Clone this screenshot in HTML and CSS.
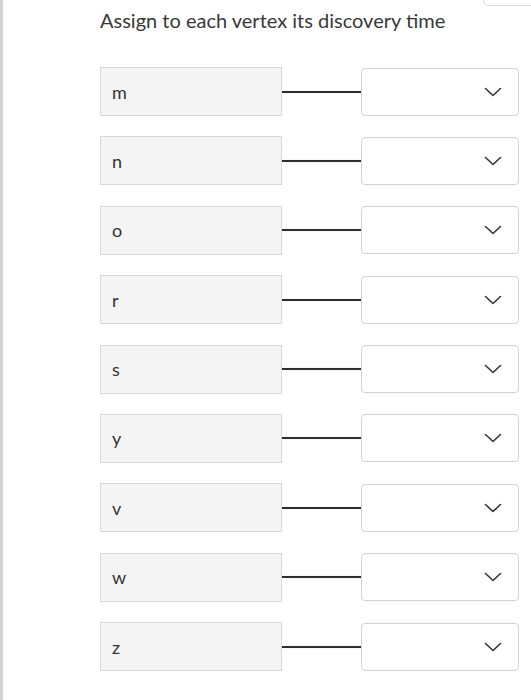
FILE: index.html
```html
<!DOCTYPE html>
<html>
<head>
<meta charset="utf-8">
<link rel="stylesheet" href="styles.css">
</head>
<body>
<div class="page">
  <div class="top-btn"></div>
  <h1 class="title">Assign to each vertex its discovery time</h1>
  <div class="rows">
    <div class="row"><div class="term">m</div><div class="link"></div><div class="select"><svg class="chev" width="18" height="10" viewBox="0 0 18 10"><polyline points="1.5,1.5 9,8.5 16.5,1.5"/></svg></div></div>
    <div class="row"><div class="term">n</div><div class="link"></div><div class="select"><svg class="chev" width="18" height="10" viewBox="0 0 18 10"><polyline points="1.5,1.5 9,8.5 16.5,1.5"/></svg></div></div>
    <div class="row"><div class="term">o</div><div class="link"></div><div class="select"><svg class="chev" width="18" height="10" viewBox="0 0 18 10"><polyline points="1.5,1.5 9,8.5 16.5,1.5"/></svg></div></div>
    <div class="row"><div class="term">r</div><div class="link"></div><div class="select"><svg class="chev" width="18" height="10" viewBox="0 0 18 10"><polyline points="1.5,1.5 9,8.5 16.5,1.5"/></svg></div></div>
    <div class="row"><div class="term">s</div><div class="link"></div><div class="select"><svg class="chev" width="18" height="10" viewBox="0 0 18 10"><polyline points="1.5,1.5 9,8.5 16.5,1.5"/></svg></div></div>
    <div class="row"><div class="term">y</div><div class="link"></div><div class="select"><svg class="chev" width="18" height="10" viewBox="0 0 18 10"><polyline points="1.5,1.5 9,8.5 16.5,1.5"/></svg></div></div>
    <div class="row"><div class="term">v</div><div class="link"></div><div class="select"><svg class="chev" width="18" height="10" viewBox="0 0 18 10"><polyline points="1.5,1.5 9,8.5 16.5,1.5"/></svg></div></div>
    <div class="row"><div class="term">w</div><div class="link"></div><div class="select"><svg class="chev" width="18" height="10" viewBox="0 0 18 10"><polyline points="1.5,1.5 9,8.5 16.5,1.5"/></svg></div></div>
    <div class="row"><div class="term">z</div><div class="link"></div><div class="select"><svg class="chev" width="18" height="10" viewBox="0 0 18 10"><polyline points="1.5,1.5 9,8.5 16.5,1.5"/></svg></div></div>
  </div>
</div>
</body>
</html>
```
FILE: styles.css
```css
html, body {
  margin: 0;
  padding: 0;
  background: #ffffff;
}
.page {
  position: relative;
  height: 700px;
  box-sizing: border-box;
  border-left: 3px solid #d4d4d4;
  padding-left: 97px;
  font-family: Lato, "Open Sans", sans-serif;
  color: #333333;
  overflow: hidden;
}
.top-btn {
  position: absolute;
  top: -10px;
  left: 480px;
  width: 60px;
  height: 14px;
  border: 1px solid #dcdcdc;
  border-radius: 5px;
  background: #fff;
}
.title {
  margin: 0;
  padding-top: 6px;
  font-size: 20px;
  font-weight: 400;
  line-height: 28px;
  color: #383838;
  letter-spacing: 0;
}
.rows {
  margin-top: 33px;
  display: flex;
  flex-direction: column;
  gap: 20.375px;
}
.row {
  display: flex;
  align-items: center;
  height: 49px;
}
.term {
  box-sizing: border-box;
  width: 182px;
  height: 49px;
  background: #f4f4f4;
  border: 1px solid #d8d8d8;
  padding-left: 11px;
  display: flex;
  align-items: center;
  font-size: 18px;
  color: #333;
}
.link {
  width: 79px;
  height: 2px;
  background: #2e2e2e;
  box-shadow: 0 0 1px rgba(0,0,0,0.3);
}
.select {
  box-sizing: border-box;
  width: 158px;
  height: 48px;
  border: 1px solid #d2d2d2;
  border-radius: 4px;
  background: #fff;
  display: flex;
  align-items: center;
  justify-content: flex-end;
  padding-right: 16px;
}
.chev polyline {
  fill: none;
  stroke: #333;
  stroke-width: 1.6;
  stroke-linecap: round;
  stroke-linejoin: round;
}
```
